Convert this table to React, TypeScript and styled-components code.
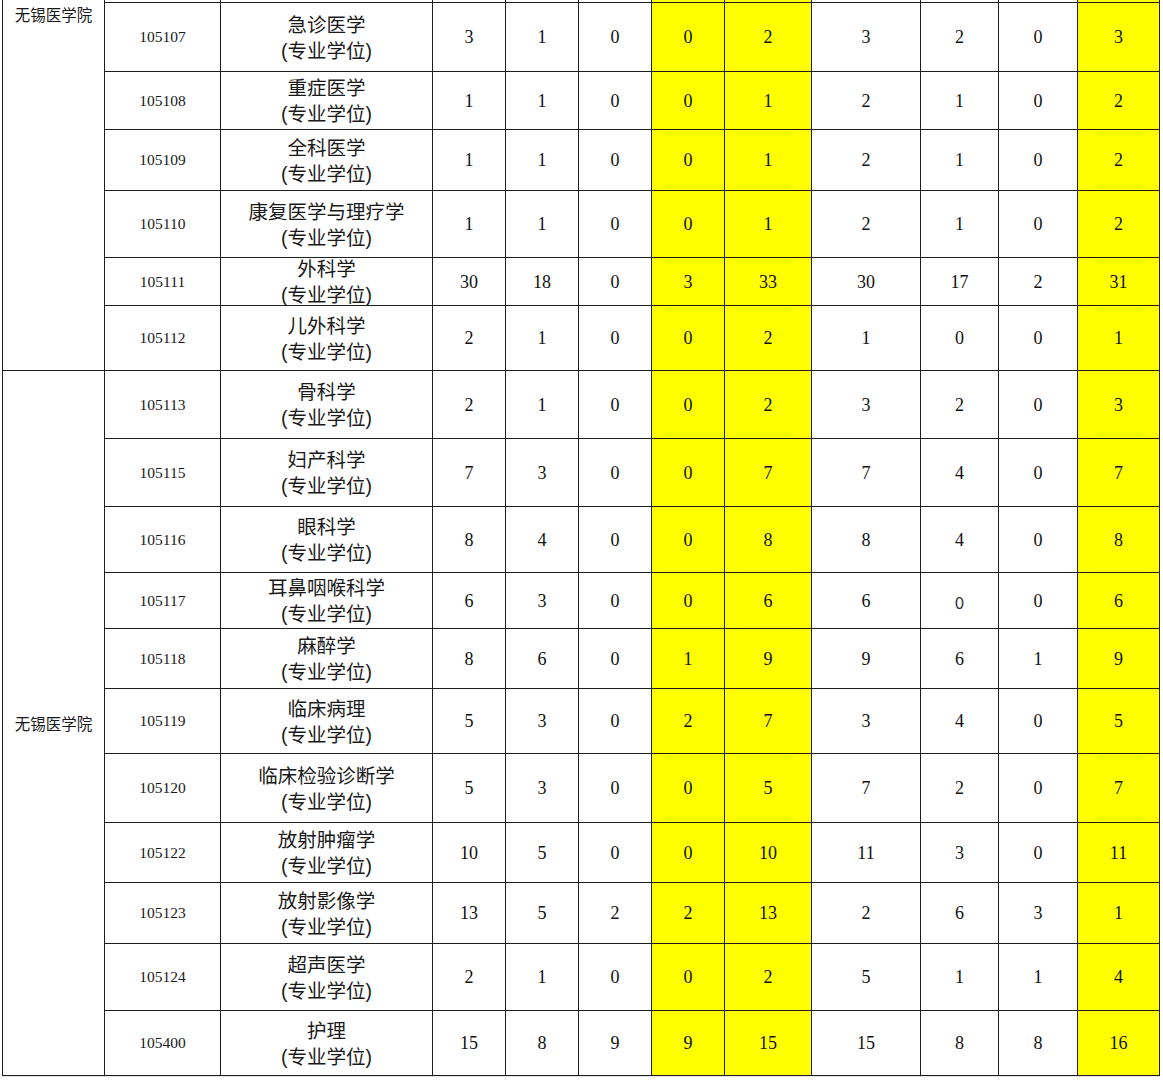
import React from "react";
import styled, { createGlobalStyle } from "styled-components";

const Global = createGlobalStyle`
  html, body { margin: 0; padding: 0; background: #ffffff; }
  body { font-family: "Liberation Serif", "Times New Roman", serif; color: #111; }
`;

const COLS = [101, 115, 211, 72, 72, 72, 72, 86, 108, 77, 78, 81];
const YELLOW = new Set([6, 7, 11]);

type Row = { code: string; name: string; nums: (number | string)[]; h: number };

const GROUP1: Row[] = [
  { code: "105107", name: "急诊医学", nums: [3, 1, 0, 0, 2, 3, 2, 0, 3], h: 68 },
  { code: "105108", name: "重症医学", nums: [1, 1, 0, 0, 1, 2, 1, 0, 2], h: 57 },
  { code: "105109", name: "全科医学", nums: [1, 1, 0, 0, 1, 2, 1, 0, 2], h: 60 },
  { code: "105110", name: "康复医学与理疗学", nums: [1, 1, 0, 0, 1, 2, 1, 0, 2], h: 66 },
  { code: "105111", name: "外科学", nums: [30, 18, 0, 3, 33, 30, 17, 2, 31], h: 47 },
  { code: "105112", name: "儿外科学", nums: [2, 1, 0, 0, 2, 1, 0, 0, 1], h: 64 },
];

const GROUP2: Row[] = [
  { code: "105113", name: "骨科学", nums: [2, 1, 0, 0, 2, 3, 2, 0, 3], h: 67 },
  { code: "105115", name: "妇产科学", nums: [7, 3, 0, 0, 7, 7, 4, 0, 7], h: 67 },
  { code: "105116", name: "眼科学", nums: [8, 4, 0, 0, 8, 8, 4, 0, 8], h: 65 },
  { code: "105117", name: "耳鼻咽喉科学", nums: [6, 3, 0, 0, 6, 6, "s0", 0, 6], h: 55 },
  { code: "105118", name: "麻醉学", nums: [8, 6, 0, 1, 9, 9, 6, 1, 9], h: 59 },
  { code: "105119", name: "临床病理", nums: [5, 3, 0, 2, 7, 3, 4, 0, 5], h: 64 },
  { code: "105120", name: "临床检验诊断学", nums: [5, 3, 0, 0, 5, 7, 2, 0, 7], h: 68 },
  { code: "105122", name: "放射肿瘤学", nums: [10, 5, 0, 0, 10, 11, 3, 0, 11], h: 59 },
  { code: "105123", name: "放射影像学", nums: [13, 5, 2, 2, 13, 2, 6, 3, 1], h: 60 },
  { code: "105124", name: "超声医学", nums: [2, 1, 0, 0, 2, 5, 1, 1, 4], h: 66 },
  { code: "105400", name: "护理", nums: [15, 8, 9, 9, 15, 15, 8, 8, 16], h: 64 },
];

const SLIVER = 2;
const ROW_HEIGHTS = [SLIVER, ...GROUP1.map((r) => r.h), ...GROUP2.map((r) => r.h)];

const Page = styled.div`
  padding-left: 2px;
`;

const Grid = styled.div`
  display: grid;
  width: max-content;
  grid-template-columns: ${COLS.map((c) => `${c}px`).join(" ")};
  grid-template-rows: ${ROW_HEIGHTS.map((h) => `${h}px`).join(" ")};
  gap: 1px;
  padding: 0 1px 1px 1px;
  background: #1e1e1e;
`;

const Cell = styled.div<{ $yellow?: boolean }>`
  display: flex;
  align-items: center;
  justify-content: center;
  background: ${(p) => (p.$yellow ? "#ffff00" : "#ffffff")};
  overflow: visible;
  min-width: 0;
  min-height: 0;
`;

const GroupCell = styled(Cell)<{ $span: number; $top?: boolean }>`
  grid-column: 1;
  grid-row: span ${(p) => p.$span};
  align-items: ${(p) => (p.$top ? "flex-start" : "center")};
  padding-top: ${(p) => (p.$top ? "3px" : "0")};
  font-family: "Noto Sans CJK SC", "Noto Sans", sans-serif;
  font-size: 15.5px;
  line-height: 22px;
  color: #1a1a1a;
`;

const CodeCell = styled(Cell)`
  font-family: "Liberation Serif", "Times New Roman", serif;
  font-size: 15.5px;
  color: #1a1a1a;
`;

const NameCell = styled(Cell)`
  padding-top: 1px;
  font-family: "Liberation Sans", "Noto Sans CJK SC", sans-serif;
  font-size: 19.5px;
  line-height: 26px;
  color: #1a1a1a;
  text-align: center;
  white-space: nowrap;
`;

const NameText = styled.p`
  margin: 0;
`;

const NumCell = styled(Cell)<{ $sans?: boolean }>`
  padding-top: 1px;
  font-family: ${(p) =>
    p.$sans ? `"Noto Sans CJK SC", "Noto Sans", sans-serif` : `"Liberation Serif", "Times New Roman", serif`};
  font-size: ${(p) => (p.$sans ? "17px" : "18px")};
  color: ${(p) => (p.$sans ? "#333" : "#111")};
`;

const Tail = styled.div`
  width: 1158px;
  height: 3px;
  border-top: 1px solid #e4e4e4;
`;

function DataRow({ row }: { row: Row }) {
  return (
    <>
      <CodeCell>{row.code}</CodeCell>
      <NameCell>
        <NameText>
          {row.name}
          <br />
          (专业学位)
        </NameText>
      </NameCell>
      {row.nums.map((n, i) => {
        const sans = n === "s0";
        return (
          <NumCell key={i} $yellow={YELLOW.has(i + 3)} $sans={sans}>
            {sans ? "0" : n}
          </NumCell>
        );
      })}
    </>
  );
}

export default function App() {
  return (
    <Page>
      <Global />
      <Grid>
        <GroupCell $span={1 + GROUP1.length} $top>
          无锡医学院
        </GroupCell>
        {COLS.slice(1).map((_, i) => (
          <Cell key={`s${i}`} $yellow={YELLOW.has(i + 1)} />
        ))}
        {GROUP1.map((r) => (
          <DataRow key={r.code} row={r} />
        ))}
        <GroupCell $span={GROUP2.length}>无锡医学院</GroupCell>
        {GROUP2.map((r) => (
          <DataRow key={r.code} row={r} />
        ))}
      </Grid>
      <Tail />
    </Page>
  );
}
